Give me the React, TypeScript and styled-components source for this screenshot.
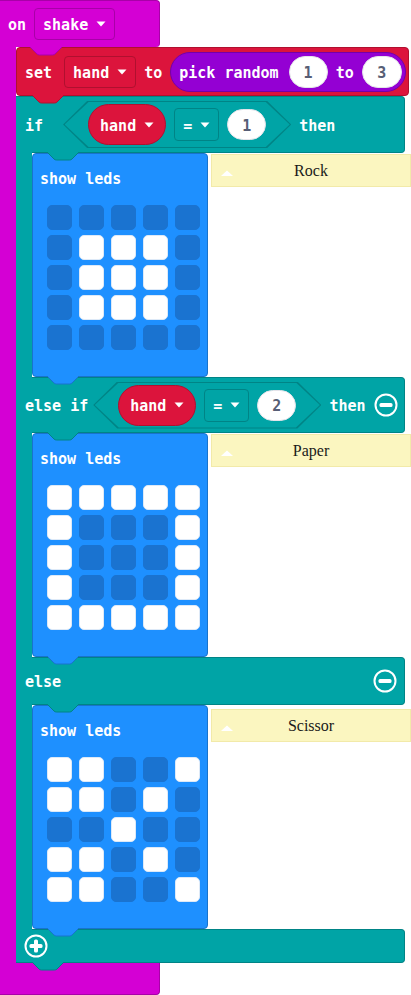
import styled, { createGlobalStyle } from "styled-components";

const GlobalStyle = createGlobalStyle`
  html, body {
    margin: 0;
    padding: 0;
    background: #fff;
    overflow: hidden;
  }
  body {
    font-family: "DejaVu Sans Mono", "Liberation Mono", monospace;
  }
`;

const c = {
  event: "#d400d4",
  eventDark: "#a800a8",
  variable: "#dc143c",
  variableDark: "#b0102f",
  math: "#9400d3",
  mathDark: "#7400a8",
  logic: "#00a4a6",
  logicDark: "#008486",
  basic: "#1e90ff",
  basicDark: "#1873cc",
  ledOff: "#1a73d0",
};

const Canvas = styled.div`
  width: 411px;
  height: 995px;
  overflow: hidden;
`;

const EventBlock = styled.div`
  display: flex;
  flex-direction: column;
  align-items: flex-start;
`;

const Hat = styled.div`
  position: relative;
  width: 160px;
  height: 47px;
  box-sizing: border-box;
  display: flex;
  align-items: center;
  gap: 8px;
  padding-left: 8px;
  background: ${c.event};
  border: 1px solid ${c.eventDark};
  border-left: 0;
  border-bottom: 0;
  border-radius: 0 4px 4px 0;
`;

const EventBody = styled.div`
  display: flex;
  align-items: stretch;
`;

const EventArm = styled.div`
  width: 16px;
  flex-shrink: 0;
  background: ${c.event};
`;

const Stack = styled.div`
  display: flex;
  flex-direction: column;
  align-items: flex-start;
`;

const EventFoot = styled.div`
  width: 160px;
  height: 32px;
  box-sizing: border-box;
  background: ${c.event};
  border: 1px solid ${c.eventDark};
  border-top: 0;
  border-left: 0;
  border-radius: 0 0 4px 0;
`;

// padding-top nudges the monospace glyphs down to the block's visual centre
const Label = styled.span`
  color: #fff;
  font-weight: bold;
  font-size: 15px;
  line-height: 1;
  white-space: pre;
  padding-top: 3px;
`;

const Dropdown = styled.div<{ $h: number; $border: string }>`
  display: flex;
  align-items: center;
  gap: 8px;
  height: ${(p) => p.$h}px;
  padding: 0 8px;
  box-sizing: border-box;
  border: 1px solid ${(p) => p.$border};
  border-radius: 4px;
`;

const Reporter = styled.div<{ $bg: string; $border: string; $h: number; $pad: string }>`
  display: flex;
  align-items: center;
  gap: 8px;
  height: ${(p) => p.$h}px;
  padding: ${(p) => p.$pad};
  box-sizing: border-box;
  background: ${(p) => p.$bg};
  border: 1px solid ${(p) => p.$border};
  border-radius: ${(p) => p.$h / 2}px;
`;

const Oval = styled.div<{ $w: number; $h: number }>`
  display: flex;
  align-items: center;
  justify-content: center;
  width: ${(p) => p.$w}px;
  height: ${(p) => p.$h}px;
  box-sizing: border-box;
  padding-top: 2px;
  background: #fff;
  border: 1px solid #e4e4ea;
  border-radius: ${(p) => p.$h / 2}px;
  color: #575e75;
  font-weight: bold;
  font-size: 15px;
`;

const SetBlock = styled.div`
  position: relative;
  width: 393px;
  height: 49px;
  box-sizing: border-box;
  display: flex;
  align-items: center;
  gap: 8px;
  padding-left: 8px;
  background: ${c.variable};
  border: 1px solid ${c.variableDark};
  border-radius: 4px;
`;

const IfBlock = styled.div`
  display: flex;
  flex-direction: column;
  width: 389px;
`;

const Header = styled.div<{ $h: number; $padLeft?: number }>`
  position: relative;
  display: flex;
  align-items: center;
  gap: 8px;
  height: ${(p) => p.$h}px;
  box-sizing: border-box;
  padding: 0 7px 0 ${(p) => p.$padLeft ?? 9}px;
  background: ${c.logic};
  border: 1px solid ${c.logicDark};
  border-left: 0;
  border-radius: 0 4px 4px 0;
`;

const Hexagon = styled.div<{ $ml: number }>`
  position: relative;
  isolation: isolate;
  display: flex;
  align-items: center;
  gap: 8px;
  height: 47px;
  padding: 0 25px;
  flex-shrink: 0;
  margin-left: ${(p) => p.$ml}px;

  &::before,
  &::after {
    content: "";
    position: absolute;
    z-index: -1;
    clip-path: polygon(24px 0, calc(100% - 24px) 0, 100% 50%, calc(100% - 24px) 100%, 24px 100%, 0 50%);
  }
  &::before {
    inset: 0;
    background: ${c.logicDark};
  }
  &::after {
    inset: 1px 1.5px;
    background: ${c.logic};
  }
`;

const IconSlot = styled.div<{ $auto?: boolean }>`
  display: flex;
  flex-shrink: 0;
  margin-left: ${(p) => (p.$auto ? "auto" : "0")};
`;

const Branch = styled.div`
  display: flex;
  align-items: flex-start;
`;

const BranchArm = styled.div`
  align-self: stretch;
  width: 16px;
  flex-shrink: 0;
  margin: -1px 0;
  position: relative;
  z-index: 1;
  background: ${c.logic};
`;

const LedBlock = styled.div`
  position: relative;
  width: 176px;
  height: 224px;
  box-sizing: border-box;
  padding: 12px 7px 26px 14px;
  background: ${c.basic};
  border: 1px solid ${c.basicDark};
  border-radius: 4px;
  flex-shrink: 0;
`;

const LedTitle = styled.div`
  height: 24px;
  display: flex;
  align-items: center;
  margin-left: -7px;
`;

const LedGrid = styled.div`
  display: grid;
  grid-template-columns: repeat(5, 25px);
  grid-auto-rows: 25px;
  column-gap: 7px;
  row-gap: 5px;
  margin-top: 15px;
`;

const Led = styled.div<{ $on: boolean }>`
  border-radius: 5px;
  box-sizing: border-box;
  background: ${(p) => (p.$on ? "#fff" : c.ledOff)};
  border: 1px solid ${(p) => (p.$on ? "#dde9f7" : c.ledOff)};
`;

const Comment = styled.div<{ $top: number }>`
  margin-left: 3px;
  margin-top: ${(p) => p.$top}px;
  width: 200px;
  height: 33px;
  flex-shrink: 0;
  box-sizing: border-box;
  display: grid;
  grid-template-columns: 1fr auto 1fr;
  align-items: center;
  background: #fbf6c0;
  border: 1px solid #f2eaa9;
  font-family: "Liberation Serif", "Times New Roman", serif;
  font-size: 16px;
  color: #1a1a1a;
`;

const CommentCaret = styled.svg`
  margin-left: 9px;
  margin-top: 4px;
`;

const NotchSvg = styled.svg<{ $left: number }>`
  position: absolute;
  left: ${(p) => p.$left}px;
  bottom: -9px;
  z-index: 3;
`;

const Notch = ({ left, fill, stroke }: { left: number; fill: string; stroke: string }) => (
  <NotchSvg $left={left} width="32" height="10" viewBox="0 0 32 10">
    <path d="M0 0H32V1L25 8Q24 9 22.5 9H9.5Q8 9 7 8L0 1Z" fill={fill} />
    <path d="M0 1L7 8Q8 9 9.5 9H22.5Q24 9 25 8L32 1" fill="none" stroke={stroke} strokeWidth="1" />
  </NotchSvg>
);

const Caret = () => (
  <svg width="10" height="6" viewBox="0 0 10 6">
    <path d="M0.5 0.5H9.5L5 5.5Z" fill="#fff" />
  </svg>
);

const CircleButton = ({ plus, auto }: { plus?: boolean; auto?: boolean }) => (
  <IconSlot $auto={auto}>
    <svg width="24" height="24" viewBox="0 0 24 24">
      <circle cx="12" cy="12" r="10.5" fill="none" stroke="#fff" strokeWidth="2" />
      <rect x="5.5" y="10" width="13" height="4" rx="1.5" fill="#fff" />
      {plus && <rect x="10" y="5.5" width="4" height="13" rx="1.5" fill="#fff" />}
    </svg>
  </IconSlot>
);

const patterns: Record<string, string[]> = {
  Rock: ["00000", "01110", "01110", "01110", "00000"],
  Paper: ["11111", "10001", "10001", "10001", "11111"],
  Scissor: ["11001", "11010", "00100", "11010", "11001"],
};

const ShowLeds = ({ rows }: { rows: string[] }) => (
  <LedBlock>
    <LedTitle>
      <Label>show leds</Label>
    </LedTitle>
    <LedGrid>
      {rows.flatMap((row, r) =>
        row.split("").map((v, i) => <Led key={`${r}-${i}`} $on={v === "1"} />)
      )}
    </LedGrid>
    <Notch left={14} fill={c.basic} stroke={c.basicDark} />
  </LedBlock>
);

const BranchRow = ({ name, top }: { name: string; top: number }) => (
  <Branch>
    <BranchArm />
    <ShowLeds rows={patterns[name]} />
    <Comment $top={top}>
      <CommentCaret width="12" height="6" viewBox="0 0 12 6">
        <path d="M0 6L6 0.5L12 6Z" fill="#fff" />
      </CommentCaret>
      <span>{name}</span>
      <span />
    </Comment>
  </Branch>
);

const Condition = ({ value, ml }: { value: string; ml: number }) => (
  <Hexagon $ml={ml}>
    <Reporter $bg={c.variable} $border={c.variableDark} $h={41} $pad="0 11px">
      <Label>hand</Label>
      <Caret />
    </Reporter>
    <Dropdown $h={33} $border={c.logicDark}>
      <Label>=</Label>
      <Caret />
    </Dropdown>
    <Oval $w={39} $h={31}>{value}</Oval>
  </Hexagon>
);

export default function App() {
  return (
    <Canvas>
      <GlobalStyle />
      <EventBlock>
        <Hat>
          <Label>on</Label>
          <Dropdown $h={32} $border={c.eventDark}>
            <Label>shake</Label>
            <Caret />
          </Dropdown>
          <Notch left={30} fill={c.event} stroke={c.eventDark} />
        </Hat>
        <EventBody>
          <EventArm />
          <Stack>
            <SetBlock>
              <Label>set</Label>
              <Dropdown $h={32} $border={c.variableDark} style={{ marginLeft: 4 }}>
                <Label>hand</Label>
                <Caret />
              </Dropdown>
              <Label>to</Label>
              <Reporter $bg={c.math} $border={c.mathDark} $h={40} $pad="0 3px 0 8px">
                <Label>pick random</Label>
                <Oval $w={39} $h={32} style={{ marginLeft: 2 }}>1</Oval>
                <Label>to</Label>
                <Oval $w={40} $h={32}>3</Oval>
              </Reporter>
              <Notch left={15} fill={c.variable} stroke={c.variableDark} />
            </SetBlock>
            <IfBlock>
              <Header $h={57}>
                <Label>if</Label>
                <Condition value="1" ml={12} />
                <Label>then</Label>
                <Notch left={31} fill={c.logic} stroke={c.logicDark} />
              </Header>
              <BranchRow name="Rock" top={1} />
              <Header $h={56}>
                <Label>else if</Label>
                <Condition value="2" ml={-3} />
                <Label>then</Label>
                <CircleButton auto />
                <Notch left={31} fill={c.logic} stroke={c.logicDark} />
              </Header>
              <BranchRow name="Paper" top={1} />
              <Header $h={48}>
                <Label>else</Label>
                <CircleButton auto />
                <Notch left={31} fill={c.logic} stroke={c.logicDark} />
              </Header>
              <BranchRow name="Scissor" top={4} />
              <Header $h={34} $padLeft={8}>
                <CircleButton plus />
                <Notch left={16} fill={c.logic} stroke={c.logicDark} />
              </Header>
            </IfBlock>
          </Stack>
        </EventBody>
        <EventFoot />
      </EventBlock>
    </Canvas>
  );
}
